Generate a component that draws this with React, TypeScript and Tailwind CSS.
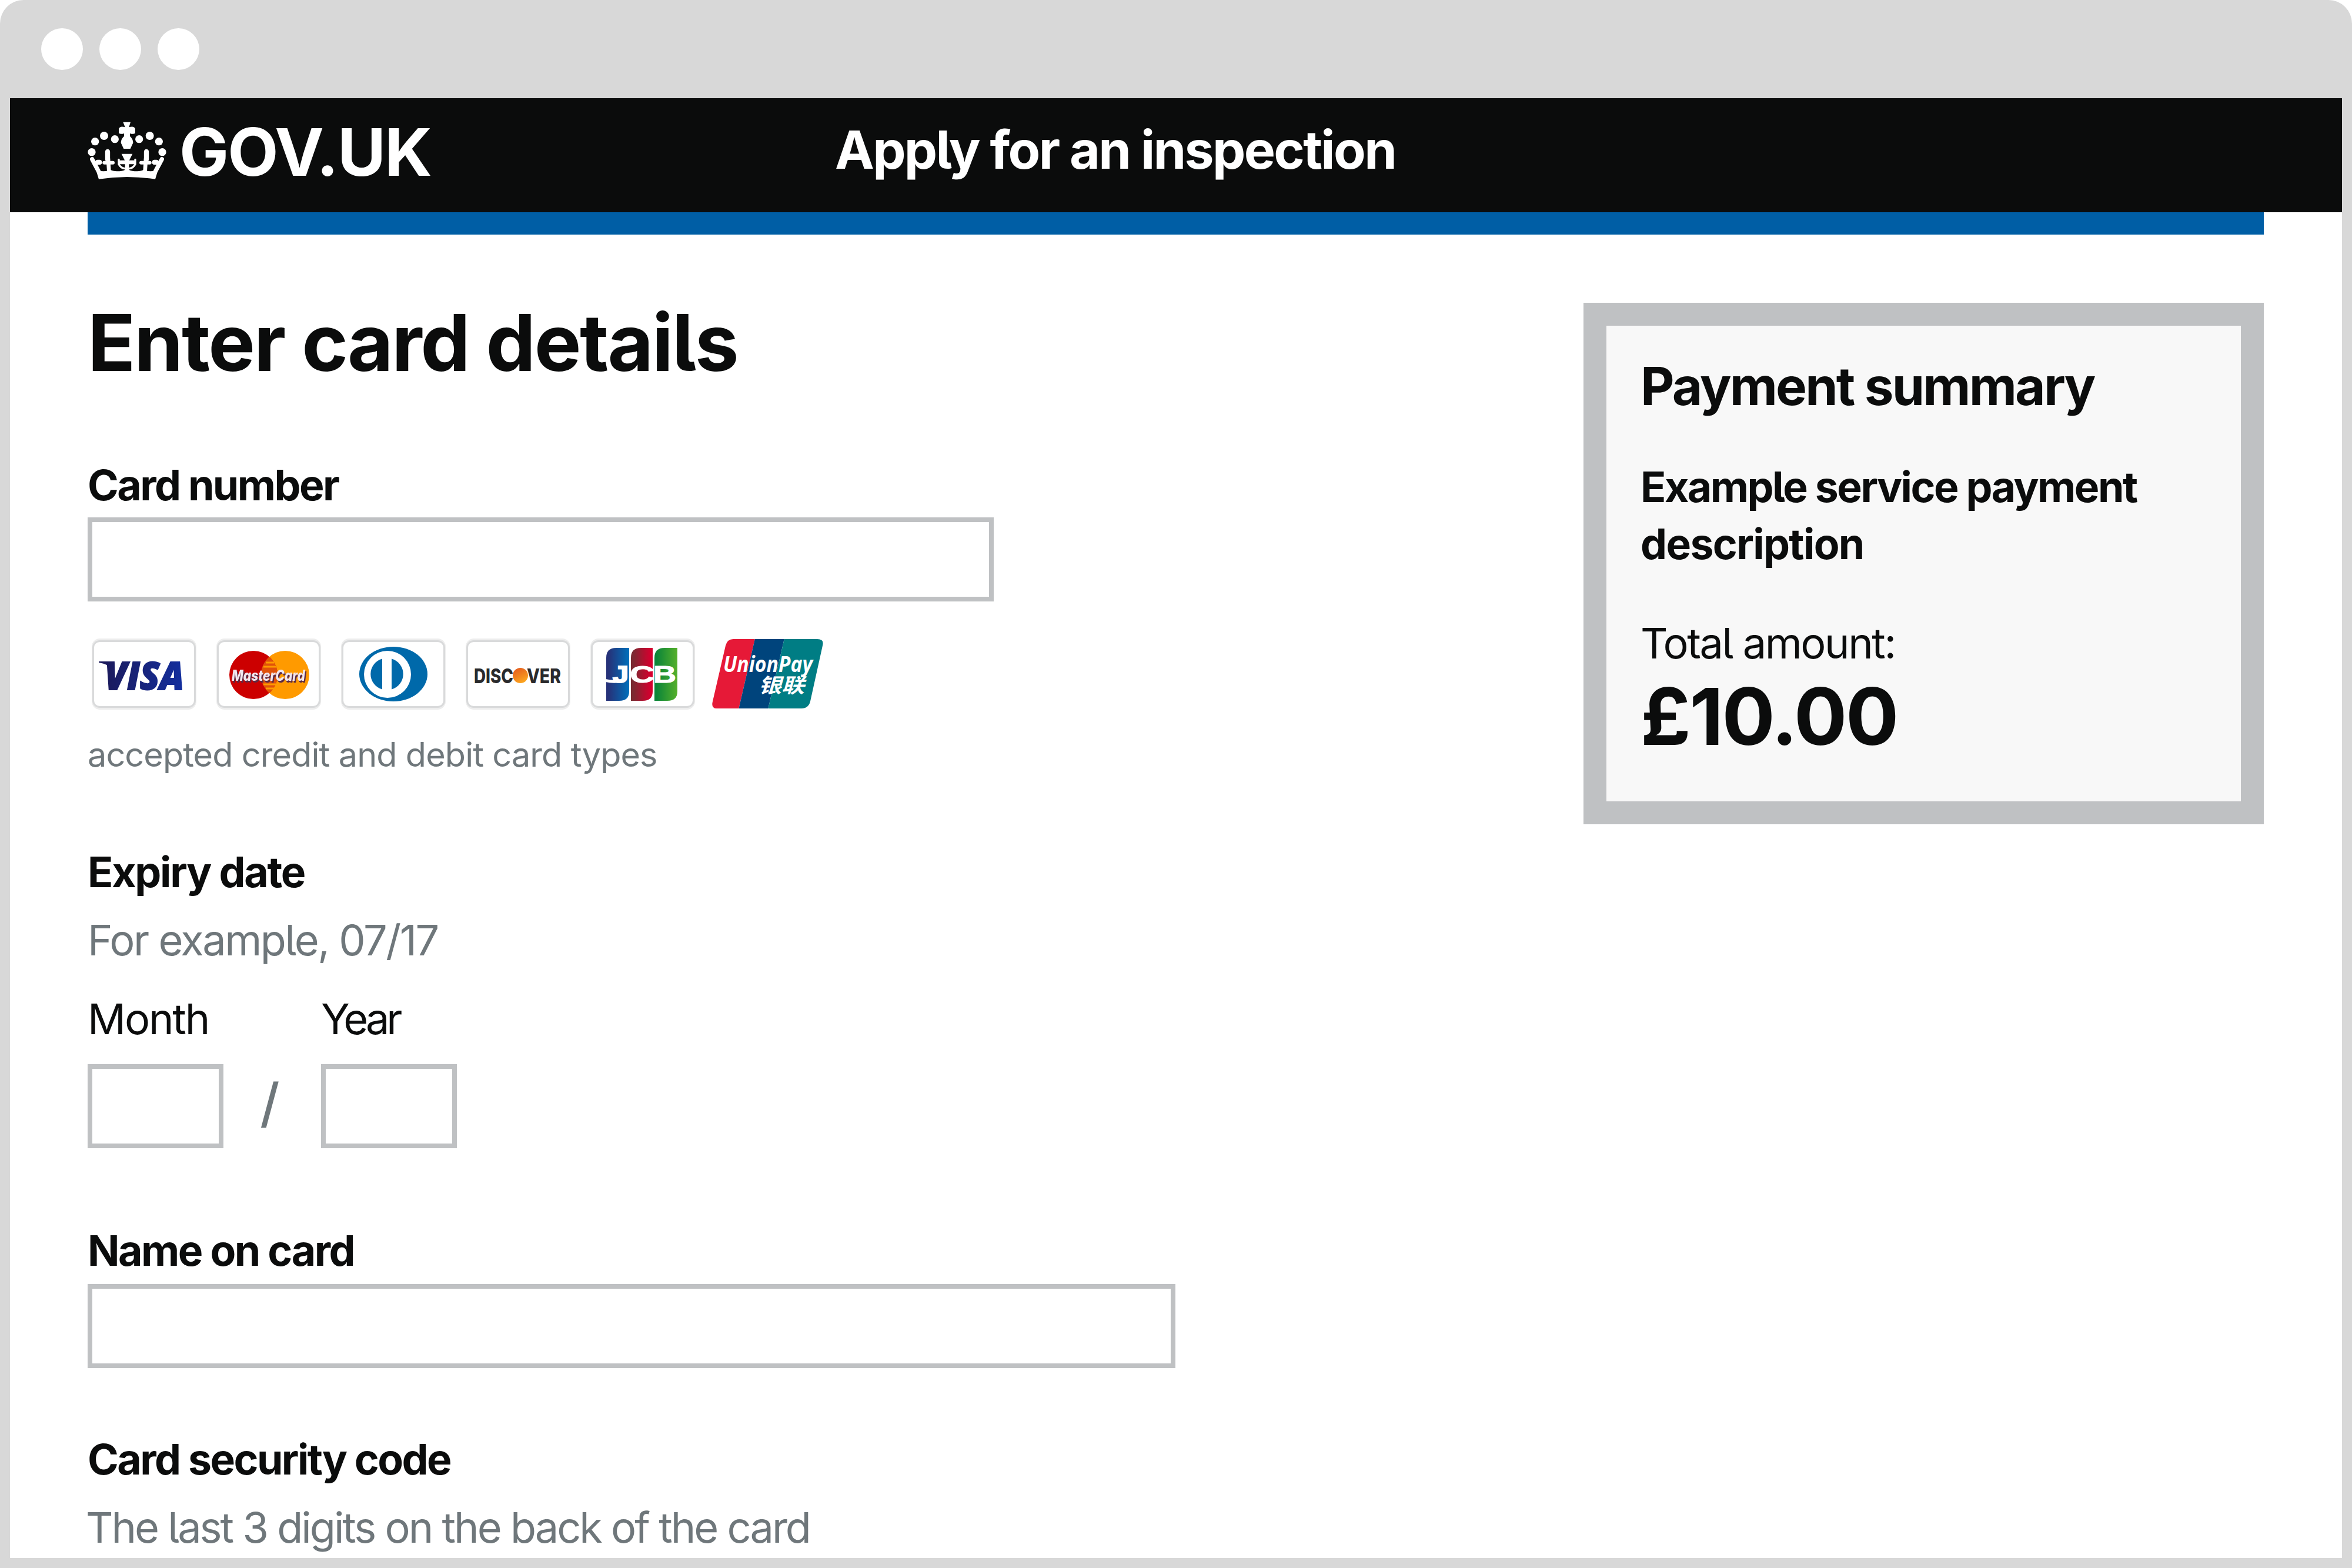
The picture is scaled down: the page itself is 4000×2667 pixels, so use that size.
import React from 'react';

const label = 'text-[71.5px] leading-[96px] font-bold text-[#0b0c0c] whitespace-nowrap';
const hint = 'text-[72px] leading-[96px] text-[#6f777b] whitespace-nowrap';
const body = 'text-[72px] leading-[96px] text-[#0b0c0c] whitespace-nowrap';
const field = 'block box-border border-8 border-[#bfc1c3] bg-white outline-none h-[143px]';

function Crown() {
  const dots: [number, number, number][] = [
    [78, 204, 20], [95, 150, 20], [141, 121, 21], [196, 138, 20],
    [438, 204, 20], [421, 150, 20], [374, 121, 21], [320, 138, 20],
  ];
  return (
    <svg className="block h-[100px] w-[134px]" viewBox="57 49 402 300" fill="#fff" aria-hidden="true">
      {dots.map(([cx, cy, r]) => (
        <circle key={`${cx}`} cx={cx} cy={cy} r={r} />
      ))}
      <path d="M238 51h38l-8 26q26-8 32 8v22q-8 8-27 2v14q16 14 16 34l-14 30h-34l-14-30q0-20 16-34v-14q-19 6-27-2V85q6-16 32-8z" />
      <g fill="none" stroke="#fff" strokeLinecap="round">
        <path d="M80 240l32 60M436 240l-32 60" strokeWidth="22" />
        <path d="M108 256h10M408 256h-10" strokeWidth="26" />
        <path d="M159 202v40M357 202v40" strokeWidth="25" />
        <path d="M162 240l4 60M354 240l-4 60" strokeWidth="20" />
        <path d="M142 258h44M374 258h-44" strokeWidth="18" />
        <path d="M224 256h68" strokeWidth="20" />
        <path d="M216 242v24q10 20 30 22M300 242v24q-10 20-30 22" strokeWidth="10" />
      </g>
      <path d="M230 213h56l-18 36v52h-20v-52z" />
      <path d="M98 290q10 12 40 12 26 0 32-10 14 10 36 10 30 0 42-8h20q12 8 42 8 22 0 36-10 6 10 32 10 30 0 40-12L402 342q-144-22-288 0z" />
    </svg>
  );
}

function Card({ children }: { children: React.ReactNode }) {
  return (
    <svg className="block h-[121px] w-[178px]" viewBox="0 0 178 121">
      <rect x="2" y="2" width="174" height="117" rx="12" fill="#fff" stroke="#ededed" strokeWidth="4" />
      <rect x="2.5" y="4.5" width="173" height="112" rx="11" fill="#fff" stroke="#d9dadb" strokeWidth="3" />
      {children}
    </svg>
  );
}

function Visa() {
  return (
    <Card>
      <defs>
        <linearGradient id="visa" x1="0" x2="1">
          <stop offset="0" stopColor="#1b1a5c" />
          <stop offset="1" stopColor="#132f9f" />
        </linearGradient>
      </defs>
      <path d="M12 39h20l5 16Q29 43 12 41z" fill="#1b1a5c" />
      <text x="22" y="87" textLength="135" lengthAdjust="spacingAndGlyphs" fontFamily="Open Sans, sans-serif" fontWeight="800" fontStyle="italic" fontSize="66" fill="url(#visa)" stroke="url(#visa)" strokeWidth="2">VISA</text>
    </Card>
  );
}

function MasterCard() {
  return (
    <Card>
      <circle cx="117" cy="62" r="41" fill="#ff9a00" />
      <circle cx="63" cy="62" r="41" fill="#cc0000" />
      <path d="M90 31a41 41 0 0 1 0 62a41 41 0 0 1 0-62z" fill="#e0520a" />
      <path d="M84 41h14M80 48h21M80 78h21M84 85h14" stroke="#ff9a00" strokeWidth="3" />
      <text className="drop-shadow-[2px_3px_0_#5b2a45]" x="26" y="72" textLength="125" lengthAdjust="spacingAndGlyphs" fontFamily="Inter, sans-serif" fontWeight="800" fontStyle="italic" fontSize="26" fill="#f1e6ee">MasterCard</text>
    </Card>
  );
}

function Diners() {
  return (
    <Card>
      <ellipse cx="89" cy="60.5" rx="58" ry="46.5" fill="#0069aa" />
      <circle cx="79" cy="61" r="40" fill="#fff" />
      <path d="M70 34.500v52a27 27 0 0 1 0-52zM86 34.500a27 27 0 0 1 0 52z" fill="#0069aa" />
    </Card>
  );
}

function Discover() {
  return (
    <Card>
      <defs>
        <linearGradient id="discover" x1="0" y1="0" x2="0.5" y2="1">
          <stop offset="0" stopColor="#e2551f" />
          <stop offset="1" stopColor="#fba31f" />
        </linearGradient>
      </defs>
      <g fontFamily="Inter, sans-serif" fontWeight="800" fontSize="34" fill="#2a2a2c">
        <text x="14" y="75.500" textLength="67" lengthAdjust="spacingAndGlyphs">DISC</text>
        <text x="104" y="75.500" textLength="58" lengthAdjust="spacingAndGlyphs">VER</text>
      </g>
      <circle cx="93" cy="63" r="13" fill="url(#discover)" />
    </Card>
  );
}

function Jcb() {
  return (
    <Card>
      <defs>
        <linearGradient id="jcb-blue"><stop offset="0.1" stopColor="#263279" /><stop offset="1" stopColor="#0070bb" /></linearGradient>
        <linearGradient id="jcb-red"><stop offset="0.1" stopColor="#7a2a31" /><stop offset="0.9" stopColor="#d4002f" /></linearGradient>
        <linearGradient id="jcb-green"><stop offset="0.1" stopColor="#0c8538" /><stop offset="1" stopColor="#55b02b" /></linearGradient>
      </defs>
      <path d="M27 33Q27 16 44 16H66V90Q66 106 49 106H27z" fill="url(#jcb-blue)" />
      <path d="M69 33Q69 16 86 16H106V90Q106 106 89 106H69z" fill="url(#jcb-red)" />
      <path d="M109 33Q109 16 126 16H148V90Q148 106 131 106H109z" fill="url(#jcb-green)" />
      <path d="M26 69q12 3 24 1v5q-12 2-24-1z" fill="#fff" />
      <g fontFamily="Liberation Sans, sans-serif" fontWeight="700" fontSize="41" fill="#fff" stroke="#fff">
        <text x="38" y="75" textLength="27" lengthAdjust="spacingAndGlyphs" strokeWidth="2">J</text>
        <text x="67" y="75" textLength="42" lengthAdjust="spacingAndGlyphs">C</text>
        <text x="107" y="75" textLength="39" lengthAdjust="spacingAndGlyphs">B</text>
      </g>
    </Card>
  );
}

function UnionPay() {
  return (
    <svg className="-ml-[6px] block h-[121px] w-[192px]" viewBox="0 0 192 121">
      <defs>
        <clipPath id="unionpay">
          <path d="M37 1H180Q192 1 189 12L168 107Q165 119 153 119H9Q-1 119 2 107L24 12Q27 1 37 1z" />
        </clipPath>
      </defs>
      <g clipPath="url(#unionpay)">
        <path d="M0 0H74L46 121H0z" fill="#e61937" />
        <path d="M74 0H124L96 121H46z" fill="#00447c" />
        <path d="M124 0H192V121H96z" fill="#007d84" />
      </g>
      <g fill="#fff" fontWeight="700">
        <text x="20" y="57" textLength="152" lengthAdjust="spacingAndGlyphs" fontFamily="Open Sans, sans-serif" fontStyle="italic" fontSize="37">UnionPay</text>
        <text x="80" y="92" textLength="78" lengthAdjust="spacingAndGlyphs" fontFamily="Noto Sans CJK SC, sans-serif" fontStyle="italic" fontSize="34">银联</text>
      </g>
    </svg>
  );
}

export default function App() {
  return (
    <div className="h-[2667px] w-[4000px] bg-white font-['Inter',sans-serif] [font-feature-settings:'cv05']">
      <div className="flex h-[2667px] flex-col overflow-hidden rounded-t-[40px] bg-[#d8d8d8] px-[17px] pb-[17px]">
        <div className="flex h-[167px] shrink-0 items-center gap-[28px] pl-[53px]">
          <span className="h-[71px] w-[71px] rounded-full bg-white" />
          <span className="h-[71px] w-[71px] rounded-full bg-white" />
          <span className="h-[71px] w-[71px] rounded-full bg-white" />
        </div>
        <div className="min-h-0 flex-1 bg-white">
          <header className="grid h-[194px] grid-cols-[1271px_1fr] bg-[#0b0c0c] pl-[132px] text-white">
            <div className="flex items-start gap-[22px] pt-[40px]">
              <Crown />
              <span className="text-[112px] leading-[102px] font-bold tracking-[-0.016em]">GOV.UK</span>
            </div>
            <span className="pt-[38px] text-[89.5px] leading-[100px] font-bold tracking-[-0.030em] whitespace-nowrap">Apply for an inspection</span>
          </header>
          <div className="ml-[132px] h-[38px] w-[3701px] bg-[#005ea5]" />
          <main className="ml-[132px] flex w-[3701px] items-start justify-between">
            <form className="flex flex-col items-start">
              <h1 className="mt-[103px] text-[134px] leading-[160px] font-bold tracking-[-0.018em] whitespace-nowrap text-[#0b0c0c]">Enter card details</h1>
              <label className={`${label} mt-[115px] tracking-[-0.036em]`}>Card number</label>
              <input className={`${field} mt-[7px] w-[1541px]`} />
              <div className="mt-[63px] ml-[7px] flex gap-[34px]">
                <Visa />
                <MasterCard />
                <Diners />
                <Discover />
                <Jcb />
                <UnionPay />
              </div>
              <p className="mt-[36px] text-[57.500px] leading-[80px] tracking-[-0.0155em] whitespace-nowrap text-[#6f777b]">accepted credit and debit card types</p>
              <h2 className={`${label} mt-[112px] tracking-[-0.032em]`}>Expiry date</h2>
              <p className={`${hint} mt-[20px] tracking-[-0.034em]`}>For example, 07/17</p>
              <div className="mt-[38px] flex items-end">
                <div className="w-[231px]">
                  <label className={`${body} block tracking-[-0.030em]`}>Month</label>
                  <input className={`${field} mt-[29px] w-[231px]`} />
                </div>
                <span className="flex h-[143px] w-[166px] items-center justify-center pr-[8px] pb-[12px] text-[90px] leading-none font-medium text-[#6f777b]">/</span>
                <div className="w-[231px]">
                  <label className={`${body} block tracking-[-0.070em]`}>Year</label>
                  <input className={`${field} mt-[29px] w-[231px]`} />
                </div>
              </div>
              <label className={`${label} mt-[126px] tracking-[-0.0345em]`}>Name on card</label>
              <input className={`${field} mt-[9px] w-[1850px]`} />
              <label className={`${label} mt-[107px] tracking-[-0.036em]`}>Card security code</label>
              <p className={`${hint} mt-[20px] -ml-[3px] tracking-[-0.0415em]`}>The last 3 digits on the back of the card</p>
            </form>
            <aside className="mt-[116px] h-[887px] w-[1157px] border-[39px] border-[#bfc1c3] bg-[#f8f8f8] pt-[53px] pl-[58px] text-[#0b0c0c]">
              <h2 className="text-[89px] leading-[100px] font-bold tracking-[-0.032em] whitespace-nowrap">Payment summary</h2>
              <p className="mt-[73px] text-[71.500px] leading-[97px] font-bold tracking-[-0.035em] whitespace-nowrap">
                Example service payment
                <br />
                <span className="tracking-[-0.023em]">description</span>
              </p>
              <p className={`${body} mt-[72px] tracking-[-0.034em]`}>Total amount:</p>
              <p className="mt-[6px] text-[134px] leading-[140px] font-bold tracking-[-0.018em]">£10.00</p>
            </aside>
          </main>
        </div>
      </div>
    </div>
  );
}
